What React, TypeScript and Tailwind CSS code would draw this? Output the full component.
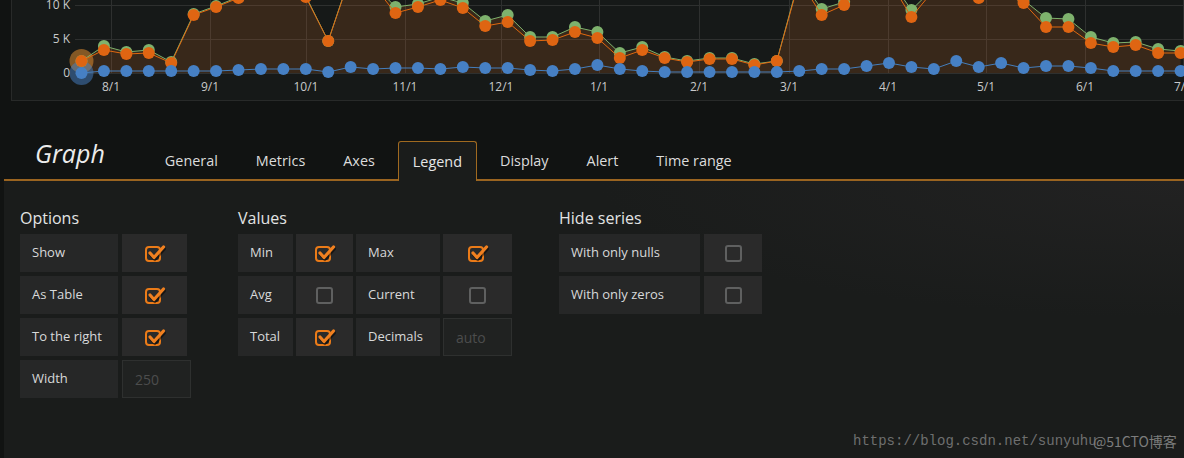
import React from 'react';

const FONT = { fontFamily: '"Open Sans", "Noto Sans", sans-serif' };

const X0 = 81.5;
const STEP = 22.43;
const ZERO = 73;

const orange = [61, 50, 54, 53, 63, 15, 7, -2, -12, -8, -3, 41, -25, -15, 13, 7, 0, 8, 26, 22, 41, 40, 32, 38, 58, 50, 58, 62, 59, 59, 65, 61, -20, 15, 5, -15, -20, 17, -10, -12, -2, -8, 3, 27, 27, 43, 47, 45, 53, 53];
const green = [61, 46, 52, 50, 62, 14, 6, -3, -13, -9, -4, 41, -26, -16, 7, 4, -3, 3, 21, 15, 37, 37, 27, 32, 53, 47, 57, 61, 58, 58, 64, 61, -22, 9, 2, -17, -22, 10, -12, -14, -4, -10, 0, 18, 19, 37, 43, 42, 49, 51];
const blue = [73, 71, 71, 71, 71, 71, 71, 70, 69, 69, 69, 72, 67, 69, 68, 68, 69, 67, 68, 68, 70, 71, 69, 65, 69, 71, 72, 72, 72, 72, 72, 72, 71, 69, 69, 66, 63, 67, 69, 61, 67, 63, 68, 66, 66, 68, 71, 71, 71, 71];

const months = [
  { x: 111, label: '8/1' },
  { x: 210, label: '9/1' },
  { x: 306, label: '10/1' },
  { x: 405, label: '11/1' },
  { x: 501, label: '12/1' },
  { x: 599, label: '1/1' },
  { x: 699, label: '2/1' },
  { x: 789, label: '3/1' },
  { x: 888, label: '4/1' },
  { x: 986, label: '5/1' },
  { x: 1085, label: '6/1' },
  { x: 1183, label: '7/1' },
];

const px = (i: number) => X0 + i * STEP;
const line = (ys: number[]) => ys.map((y, i) => `${px(i).toFixed(1)},${y}`).join(' ');

const Chart: React.FC = () => {
  const top = green.map((g, i) => Math.min(g, orange[i]));
  const area = `${px(0)},${ZERO} ${line(top)} ${px(top.length - 1)},${ZERO}`;
  return (
    <svg width="1172" height="100" viewBox="12 0 1172 100" className="block" style={FONT}>
      {[5.5, 39.5, 73.5].map((y) => (
        <line key={y} x1="75" x2="1184" y1={y} y2={y} stroke="#2e302f" strokeWidth="1" />
      ))}
      {months.map((m) => (
        <line key={m.label} x1={m.x + 0.5} x2={m.x + 0.5} y1="0" y2="74" stroke="#2e302f" strokeWidth="1" />
      ))}
      <polygon points={area} fill="rgba(226,120,40,0.17)" />
      <text x="70" y="9" textAnchor="end" fontSize="12" fill="#c8c9ca">10 K</text>
      <text x="70" y="43" textAnchor="end" fontSize="12" fill="#c8c9ca">5 K</text>
      <text x="70" y="77" textAnchor="end" fontSize="12" fill="#c8c9ca">0</text>
      {months.map((m) => (
        <text key={m.label} x={m.x} y="91" textAnchor="middle" fontSize="12" fill="#c8c9ca">
          {m.label}
        </text>
      ))}

      <circle cx={px(0)} cy="61" r="12" fill="rgba(222,140,50,0.55)" />
      <circle cx={px(0)} cy="73" r="12" fill="rgba(70,130,200,0.5)" />

      <polyline points={line(green)} fill="none" stroke="#7eb26d" strokeWidth="1" />
      {green.map((y, i) => (
        <circle key={`g${i}`} cx={px(i)} cy={y} r="6" fill="#7eb26d" />
      ))}
      <polyline points={line(orange)} fill="none" stroke="#e0680f" strokeWidth="1" />
      {orange.map((y, i) => (
        <circle key={`o${i}`} cx={px(i)} cy={y} r="6" fill="#df6512" />
      ))}
      <polyline points={line(blue)} fill="none" stroke="#447ebc" strokeWidth="1" />
      {blue.map((y, i) => (
        <circle key={`b${i}`} cx={px(i)} cy={y} r="6" fill="#4680c4" />
      ))}
    </svg>
  );
};

const Checked: React.FC = () => (
  <svg width="22" height="18" viewBox="0 0 22 18">
    <rect x="2" y="3" width="14" height="14" rx="3" fill="none" stroke="#eb7b18" strokeWidth="2" />
    <path d="M6 10 L10 14.5 L19.5 4" fill="none" stroke="#000" strokeOpacity="0.5" strokeWidth="3.2" strokeLinecap="round" strokeLinejoin="round" transform="translate(0.8 1)" />
    <path d="M6 9 L10 13.5 L19.5 3" fill="none" stroke="#f08020" strokeWidth="3.2" strokeLinecap="round" strokeLinejoin="round" />
  </svg>
);

const Unchecked: React.FC = () => (
  <div className="w-[17px] h-[17px] rounded-[3px] border-2 border-[#5f6060]" />
);

const Label: React.FC<{ text: string; w: string }> = ({ text, w }) => (
  <div className={`${w} h-[38px] bg-[#262727] flex items-center pl-3 text-[13px] text-[#d8d9da]`}>{text}</div>
);

const Box: React.FC<{ checked: boolean; w: string }> = ({ checked, w }) => (
  <div className={`${w} h-[38px] bg-[#2a2a2a] flex items-center justify-center`}>
    {checked ? <Checked /> : <Unchecked />}
  </div>
);

const Input: React.FC<{ placeholder: string; w: string }> = ({ placeholder, w }) => (
  <div className={`${w} h-[38px] bg-[#202221] border border-[#2e302f] flex items-center pl-3 text-[14px] text-[#4c4d4d]`}>
    {placeholder}
  </div>
);

const Title: React.FC<{ text: string }> = ({ text }) => (
  <div className="text-[16px] leading-[22px] text-[#e3e4e4] mb-[5px]">{text}</div>
);

const tabs = ['General', 'Metrics', 'Axes', 'Legend', 'Display', 'Alert', 'Time range'];

export default function App() {
  return (
    <div className="w-[1184px] h-[458px] bg-[#111312] overflow-hidden flex flex-col" style={FONT}>
      {/* 图表面板 */}
      <div className="ml-[11px] h-[101px] bg-[#161918] border-l border-b border-[#282a29]">
        <Chart />
      </div>

      {/* 编辑器标签栏 */}
      <div className="ml-[4px] h-[80px] flex items-end border-b-2 border-[#9a6420]">
        <div className="self-start mt-[36px] ml-[31px] mr-[45px] text-[25px] italic leading-[32px] text-[#ececec]">
          Graph
        </div>
        {tabs.map((t) => (
          <div
            key={t}
            className={
              t === 'Legend'
                ? 'h-[40px] -mb-[2px] mr-[8px] px-[14px] flex items-center text-[14.4px] text-[#e6e6e6] bg-[#1a1c1b] border border-b-0 border-[#a06a20] rounded-t-[3px]'
                : 'h-[40px] -mb-[2px] mr-[8px] px-[15px] flex items-center text-[14.4px] text-[#dcdcdc]'
            }
          >
            {t}
          </div>
        ))}
      </div>

      {/* 图例选项 */}
      <div className="relative ml-[4px] flex-1 bg-[#1a1c1b] pt-[26px] pl-[16px] flex gap-[47px] bg-[radial-gradient(ellipse_at_100%_0%,#222222_0%,#1a1c1b_35%)]">
        <div className="flex flex-col">
          <Title text="Options" />
          <div className="flex flex-col gap-[4px]">
            <div className="flex gap-[4px]">
              <Label text="Show" w="w-[98px]" />
              <Box checked w="w-[65px]" />
            </div>
            <div className="flex gap-[4px]">
              <Label text="As Table" w="w-[98px]" />
              <Box checked w="w-[65px]" />
            </div>
            <div className="flex gap-[4px]">
              <Label text="To the right" w="w-[98px]" />
              <Box checked w="w-[65px]" />
            </div>
            <div className="flex gap-[4px]">
              <Label text="Width" w="w-[98px]" />
              <Input placeholder="250" w="w-[69px]" />
            </div>
          </div>
        </div>

        <div className="flex flex-col">
          <Title text="Values" />
          <div className="flex flex-col gap-[4px]">
            <div className="flex gap-[3px]">
              <Label text="Min" w="w-[55px]" />
              <Box checked w="w-[57px]" />
              <Label text="Max" w="w-[84px]" />
              <Box checked w="w-[69px]" />
            </div>
            <div className="flex gap-[3px]">
              <Label text="Avg" w="w-[55px]" />
              <Box checked={false} w="w-[57px]" />
              <Label text="Current" w="w-[84px]" />
              <Box checked={false} w="w-[69px]" />
            </div>
            <div className="flex gap-[3px]">
              <Label text="Total" w="w-[55px]" />
              <Box checked w="w-[57px]" />
              <Label text="Decimals" w="w-[84px]" />
              <Input placeholder="auto" w="w-[69px]" />
            </div>
          </div>
        </div>

        <div className="flex flex-col">
          <Title text="Hide series" />
          <div className="flex flex-col gap-[4px]">
            <div className="flex gap-[4px]">
              <Label text="With only nulls" w="w-[141px]" />
              <Box checked={false} w="w-[58px]" />
            </div>
            <div className="flex gap-[4px]">
              <Label text="With only zeros" w="w-[141px]" />
              <Box checked={false} w="w-[58px]" />
            </div>
          </div>
        </div>

        {/* 水印 */}
        <div className="absolute left-[849px] top-[251px] text-[14px] leading-[18px] text-[#6e6f6f] whitespace-nowrap" style={{ fontFamily: '"Liberation Mono", "Noto Sans CJK SC", monospace' }}>
          https://blog.csdn.net/sunyuhu
          <span className="absolute left-[240px] top-0 text-[#7c7c7c]" style={{ fontFamily: '"Noto Sans CJK SC", sans-serif' }}>
            @51CTO博客
          </span>
        </div>
      </div>
    </div>
  );
}
